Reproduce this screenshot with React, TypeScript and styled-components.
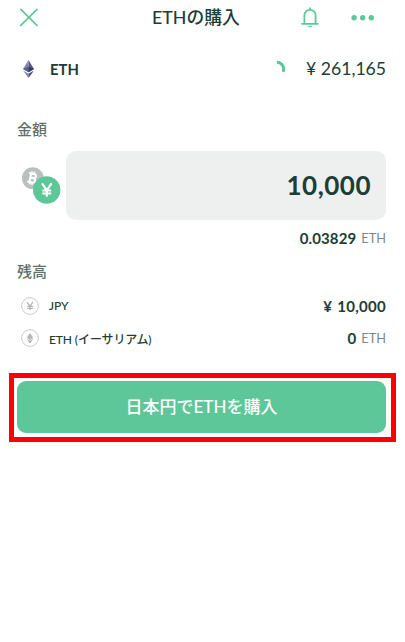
import React from "react";
import styled, { createGlobalStyle } from "styled-components";

const ink = "#203c36";
const green = "#5ec799";
const muted = "#7d8885";

const GlobalStyle = createGlobalStyle`
  * { box-sizing: border-box; }
  body {
    margin: 0;
    background: #fff;
    color: ${ink};
    font-family: Lato, "Noto Sans CJK JP", sans-serif;
  }
`;

const Screen = styled.main`
  width: 405px;
  height: 642px;
  display: flex;
  flex-direction: column;
  background: #fff;
  overflow: hidden;
  white-space: nowrap;
`;

const Header = styled.header`
  height: 35px;
  padding: 0 30px 0 19px;
  display: grid;
  grid-template-columns: 133px 149px 20px 1fr;
  align-items: center;
`;

const IconButton = styled.button`
  display: flex;
  padding: 0;
  border: 0;
  background: none;
  color: ${green};
`;

const MoreButton = styled(IconButton)`
  justify-self: end;
`;

const Title = styled.h1`
  margin: 0;
  padding-bottom: 1px;
  font-size: 17.8px;
  font-weight: 500;
  line-height: 33px;
`;

const Row = styled.div<{ $height: number; $left: number }>`
  height: ${(p) => p.$height}px;
  padding: 0 19px 0 ${(p) => p.$left}px;
  display: flex;
  align-items: center;
`;

const Coin = styled.span`
  margin-left: 15px;
  font-size: 14.8px;
  font-weight: 700;
`;

const Price = styled.div`
  margin-left: auto;
  display: flex;
  align-items: flex-start;
  gap: 20px;
  font-size: 17.6px;
  line-height: 20px;
`;

const Label = styled.h2<{ $top: number }>`
  margin: ${(p) => p.$top}px 0 0 17px;
  height: 22px;
  font-size: 15px;
  line-height: 22px;
  font-weight: 500;
  color: #5f706b;
`;

const AmountRow = styled.div`
  margin-top: 11px;
  padding: 0 19px 0 21px;
  display: flex;
  align-items: center;
  justify-content: space-between;
`;

const AmountField = styled.div`
  width: 320px;
  height: 69px;
  padding: 0 15px 2px 0;
  border-radius: 10px;
  background: #eef0f0;
  display: flex;
  align-items: center;
  justify-content: flex-end;
  font-size: 26px;
  font-weight: 700;
  letter-spacing: 0.5px;
`;

const Value = styled.span`
  margin-left: auto;
  font-size: 15px;
  font-weight: 700;
  letter-spacing: 0.1px;
`;

const Balance = styled(Value)`
  letter-spacing: 0.3px;
  word-spacing: 1px;
`;

const Unit = styled.span`
  margin-left: 5px;
  font-size: 12.8px;
  color: ${muted};
`;

const Asset = styled.span`
  margin-left: 10px;
  font-size: 12px;
  font-weight: 500;
  letter-spacing: -0.1px;
`;

const Highlight = styled.div`
  margin: 26px 9px 0;
  width: 387px;
  height: 69px;
  border: 5px solid #fe0000;
  padding: 3px 5px 4px 3px;
  display: flex;
`;

const BuyButton = styled.button`
  flex: 1;
  padding: 0 0 3px;
  border: 0;
  border-radius: 9px;
  background: ${green};
  color: #fff;
  font: 500 17px Lato, "Noto Sans CJK JP", sans-serif;
`;

const CloseIcon = () => (
  <svg width="20" height="20" viewBox="0 0 20 20" fill="none" stroke="currentColor" strokeWidth="1.7" strokeLinecap="round">
    <path d="M1.8 1.3 18 17.3M18 1.3 1.8 17.3" />
  </svg>
);

const BellIcon = () => (
  <svg width="18" height="22" viewBox="0 0 18 22" fill="none" stroke="currentColor" strokeWidth="1.8" strokeLinecap="round">
    <path d="M3.4 16.6V8.4a5.6 5.6 0 0 1 11.2 0v8.2M1.1 16.8h15.8M9 2.5V1.2" />
    <path d="M6.7 19a2.4 1.9 0 0 0 4.6 0Z" fill="currentColor" stroke="none" />
  </svg>
);

const MoreIcon = () => (
  <svg width="24" height="6" viewBox="0 0 24 6" fill="currentColor">
    <circle cx="3.1" cy="2.7" r="2.7" />
    <circle cx="11.7" cy="2.7" r="2.7" />
    <circle cx="20.3" cy="2.7" r="2.7" />
  </svg>
);

const EthIcon = () => (
  <svg width="13" height="20" viewBox="0 0 13 20">
    <path d="M6.5 1 1 10l5.5 3.2Z" fill="#8389ad" />
    <path d="M6.5 1 12 10l-5.5 3.2Z" fill="#555b85" />
    <path d="M1 10l5.5-2.4v5.6Z" fill="#5a608b" />
    <path d="M12 10 6.5 7.6v5.6Z" fill="#343a65" />
    <path d="M1 11.4l5.5 3.3V19Z" fill="#8389ad" />
    <path d="M12 11.4l-5.5 3.3V19Z" fill="#474d7a" />
  </svg>
);

const Spinner = () => (
  <svg width="10" height="14" viewBox="0 0 10 14" fill="none">
    <path d="M.8 3.2A6.8 6.8 0 0 1 7 12.8" stroke={green} strokeWidth="3" />
  </svg>
);

const PairIcon = () => (
  <svg width="40" height="40" viewBox="0 0 40 40" fill="none">
    <circle cx="11.8" cy="12.2" r="10.9" fill="#b9c0be" />
    <g transform="translate(0 -1) rotate(12 11.3 13)" stroke="#fff" strokeWidth="2.1">
      <path d="M9.3 8.7v8.8M7.2 8.7h5.1a2.1 2.1 0 0 1 0 4.2H9.3M12.3 12.9a2.3 2.3 0 0 1 0 4.6H7.2" />
      <path d="M9.8 6.4v2.3M12.2 6.4v2.3M9.8 17.5v2.3M12.2 17.5v2.3" strokeWidth="1.4" />
    </g>
    <circle cx="25.7" cy="24" r="13.7" fill={green} />
    <path d="m21 17.4 4.8 6.8 4.8-6.8M25.8 24.2v6.6M21.4 24.4h8.8M21.4 27.5h8.8" stroke="#fff" strokeWidth="2" />
  </svg>
);

const YenIcon = () => (
  <svg width="18" height="18" viewBox="0 0 18 18" fill="none">
    <circle cx="9" cy="9" r="8.4" stroke="#c6cbc9" strokeWidth="1" />
    <path d="M6 5.2 9 9.2l3-4M9 9.2v4M6.2 9.3h5.6M6.2 11.3h5.6" stroke="#aeb5b3" strokeWidth="1.2" />
  </svg>
);

const EthMiniIcon = () => (
  <svg width="18" height="18" viewBox="0 0 18 18">
    <circle cx="9" cy="9" r="8.4" fill="none" stroke="#c6cbc9" />
    <path d="M9 3.8 5.8 9.1 9 11l3.2-1.9Z" fill="#b3b9b7" />
    <path d="m5.8 10 3.2 4.4 3.2-4.4L9 11.8Z" fill="#a4abaa" />
  </svg>
);

export default function App() {
  return (
    <Screen>
      <GlobalStyle />
      <Header>
        <IconButton aria-label="閉じる"><CloseIcon /></IconButton>
        <Title>ETHの購入</Title>
        <IconButton aria-label="通知"><BellIcon /></IconButton>
        <MoreButton aria-label="メニュー"><MoreIcon /></MoreButton>
      </Header>
      <Row $height={68} $left={22}>
        <EthIcon />
        <Coin>ETH</Coin>
        <Price><Spinner /><span>¥ 261,165</span></Price>
      </Row>
      <Label $top={15}>金額</Label>
      <AmountRow>
        <PairIcon />
        <AmountField>10,000</AmountField>
      </AmountRow>
      <Row $height={36} $left={19}>
        <Value>0.03829</Value>
        <Unit>ETH</Unit>
      </Row>
      <Label $top={4}>残高</Label>
      <Row $height={47} $left={21}>
        <YenIcon />
        <Asset>JPY</Asset>
        <Balance>¥ 10,000</Balance>
      </Row>
      <Row $height={18} $left={21}>
        <EthMiniIcon />
        <Asset>ETH (イーサリアム)</Asset>
        <Value>0</Value>
        <Unit>ETH</Unit>
      </Row>
      <Highlight>
        <BuyButton>日本円でETHを購入</BuyButton>
      </Highlight>
    </Screen>
  );
}
